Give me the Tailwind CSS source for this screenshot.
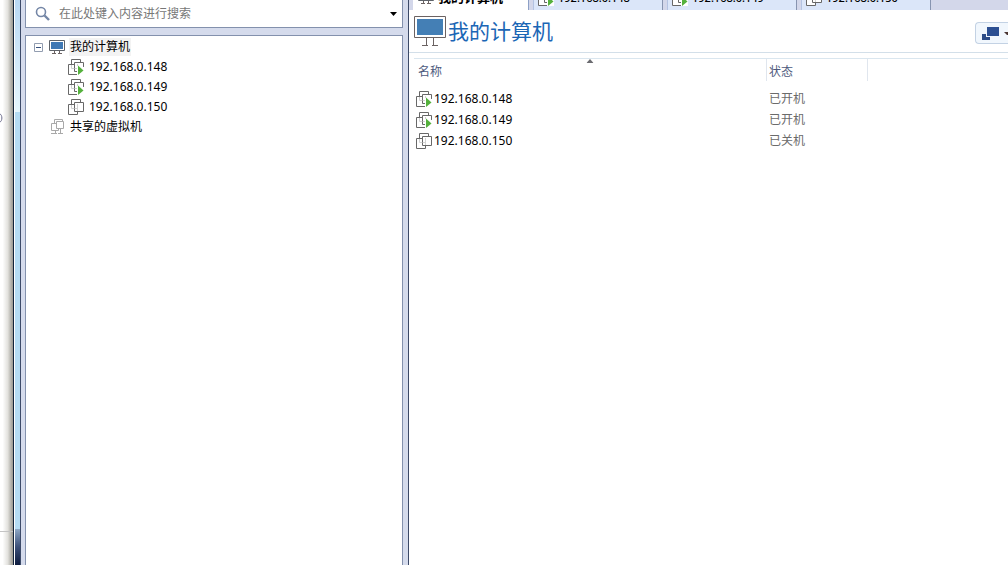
<!DOCTYPE html>
<html lang="zh-CN">
<head>
    <meta charset="UTF-8">
    <meta name="viewport" content="width=device-width, initial-scale=1.0">
    <title>我的计算机</title>
    <script src="https://cdn.jsdelivr.net/npm/@tailwindcss/browser@4"></script>
</head>
<body class="flex h-screen overflow-hidden bg-white font-['Noto_Sans','Noto_Sans_CJK_SC',sans-serif] text-xs text-black">

    <!-- 图标 -->
    <svg class="hidden">
        <symbol id="icon-computer" viewBox="0 0 32 32">
            <path d="M.5 1.500h31v21H.5z" fill="#fff" stroke="#6b6262"/>
            <path d="M3 4h26v16H3z" fill="#447fb5"/>
            <path d="M12.500 23v7M19.500 23v7M8 30.500h6M18 30.500h6" fill="none" stroke="#6b6262"/>
        </symbol>
        <symbol id="icon-computer-small" viewBox="0 0 16 16">
            <path d="M.5 1.500h15v10H.5z" fill="#fff" stroke="#5d6269"/>
            <path d="M2 3h12v7H2z" fill="#3f78b4"/>
            <path d="M5.500 12v3M10.500 12v3M3 14.500h4M9 14.500h4" fill="none" stroke="#6b6262"/>
        </symbol>
        <symbol id="icon-vm" viewBox="0 0 16 16">
            <g fill="#fff" stroke="#686868">
                <path d="M3.500.5h9v9h-9z"/>
                <path d="M.5 5.500h9v10h-9z"/>
                <path d="M6.500 3.500h9v9h-9z"/>
            </g>
            <path d="M9.500 5v7M7 9.500h2M3.500 6v3.500h3" fill="none" stroke="#d2d2d2"/>
        </symbol>
        <symbol id="icon-vm-on" viewBox="0 0 16 16">
            <use href="#icon-vm"/>
            <path d="M9 7l7 1v8H9z" fill="#fff"/>
            <path d="M10 6.500l5.500 5L10 16z" fill="#55b13d"/>
        </symbol>
        <symbol id="icon-shared" viewBox="0 0 16 16">
            <g fill="#fff" stroke="#a9a9a9">
                <path d="M4.500.5h8v8h-8z"/>
                <path d="M1.500 4.500h7v7h-7z"/>
                <path d="M6.500 2.500h7v7h-7z"/>
                <path d="M5.500 12v2M10.500 10v4M1 14.500h6M8 14.500h5" fill="none"/>
            </g>
        </symbol>
    </svg>

    <!-- 窗口边框 -->
    <div class="flex w-[25px] shrink-0">
        <div class="flex w-[13px] flex-col bg-linear-to-r from-white from-20% via-[#e2e1dd] via-60% to-[#98978f]">
            <div class="flex h-[123px] items-end overflow-hidden">
                <svg class="h-[10px] w-[3px]" viewBox="0 0 3 10"><path d="M0 1c2.500 1 2.500 7 0 8" fill="none" stroke="#6c6c8c"/></svg>
            </div>
            <div class="h-[409px] border-b border-[#c4c4c4]"></div>
        </div>
        <div class="w-px bg-[#12243a]"></div>
        <div class="w-px bg-white"></div>
        <div class="flex w-[5px] flex-col bg-[#b5dcf3]">
            <div class="h-28 bg-linear-to-b from-[#b9d9f4] to-[#e6f7fd]"></div>
            <div class="grow"></div>
            <div class="h-9 bg-linear-to-b from-[#8fa9c6] via-[#3c5079] to-[#0d1c3e]"></div>
        </div>
        <div class="w-px bg-[#3c4a68]"></div>
        <div class="w-1 bg-[#d5dbec]"></div>
    </div>

    <!-- 虚拟机库 -->
    <aside class="flex w-[378px] shrink-0 flex-col gap-[7px] bg-[#d5dbec]">
        <div class="flex h-7 items-center border border-t-0 border-[#8391ad] bg-white pr-[5px] pl-[9px]">
            <label for="search" aria-label="搜索">
                <svg class="h-4 w-4" viewBox="0 0 16 16" fill="none" stroke="#7486a6">
                    <circle cx="6" cy="6" r="4.500" stroke-width="1.600"/>
                    <path d="M9.500 9.500l4.500 4.500" stroke-width="2.400"/>
                </svg>
            </label>
            <input id="search" type="text" placeholder="在此处键入内容进行搜索" class="ml-2 grow text-xs outline-none placeholder:text-[#777777]">
            <button type="button" aria-label="搜索选项">
                <svg class="h-1 w-[7px]" viewBox="0 0 7 4"><path d="M0 0h7L3.500 4z"/></svg>
            </button>
        </div>
        <ul class="grow border border-b-0 border-[#8391ad] bg-white pt-px pl-2 leading-5">
            <li>
                <div class="flex h-5 items-center">
                    <button type="button" aria-label="折叠">
                        <svg class="h-[9px] w-[9px]" viewBox="0 0 9 9" fill="#fff" stroke="#929db0"><path d="M.5.5h8v8h-8z"/><path d="M2 4.500h5" stroke="#35507e"/></svg>
                    </button>
                    <svg class="ml-1.5 h-4 w-4"><use href="#icon-computer-small"/></svg>
                    <span class="ml-1 bg-[#f3f3f3] px-px leading-[18px]">我的计算机</span>
                </div>
                <ul class="pl-[34px]">
                    <li class="flex h-5 items-center gap-[5px]"><svg class="h-4 w-4"><use href="#icon-vm-on"/></svg>192.168.0.148</li>
                    <li class="flex h-5 items-center gap-[5px]"><svg class="h-4 w-4"><use href="#icon-vm-on"/></svg>192.168.0.149</li>
                    <li class="flex h-5 items-center gap-[5px]"><svg class="h-4 w-4"><use href="#icon-vm"/></svg>192.168.0.150</li>
                </ul>
            </li>
            <li class="flex h-5 items-center gap-1 pl-4"><svg class="h-4 w-4"><use href="#icon-shared"/></svg>共享的虚拟机</li>
        </ul>
    </aside>

    <div class="w-1.5 shrink-0 border-r border-[#3c4a68] bg-[#d5dbec]"></div>

    <main class="flex min-w-0 grow flex-col">
        <!-- 标签页 -->
        <nav class="flex h-2.5 items-end gap-1 overflow-hidden bg-[#d3d7ea] pl-1 text-[11px]">
            <button type="button" class="flex h-5 w-[116px] shrink-0 items-center gap-1 border-r border-[#8da0c6] bg-white pb-1.5 pl-[5px] text-[13px] leading-4 font-bold"><svg class="h-4 w-4 shrink-0"><use href="#icon-computer-small"/></svg>我的计算机</button>
            <button type="button" class="flex h-5 w-[130px] shrink-0 items-center gap-1 border-x border-[#8794b0] border-l-[#b4c3e2] bg-[#dbe6f9] pb-1 pl-1 leading-4 font-medium"><svg class="h-4 w-4 shrink-0"><use href="#icon-vm-on"/></svg>192.168.0.148</button>
            <button type="button" class="flex h-5 w-[130px] shrink-0 items-center gap-1 border-x border-[#8794b0] border-l-[#b4c3e2] bg-[#dbe6f9] pb-1 pl-1 leading-4 font-medium"><svg class="h-4 w-4 shrink-0"><use href="#icon-vm-on"/></svg>192.168.0.149</button>
            <button type="button" class="flex h-5 w-[130px] shrink-0 items-center gap-1 border-x border-[#8794b0] border-l-[#b4c3e2] bg-[#dbe6f9] pb-1 pl-1 leading-4 font-medium"><svg class="h-4 w-4 shrink-0"><use href="#icon-vm"/></svg>192.168.0.150</button>
        </nav>

        <header class="flex h-[43px] items-center justify-between border-b border-[#d3dfe9] pl-[5px]">
            <h1 class="flex items-center gap-0.5 text-[21px] leading-8 text-[#1b66b5]">
                <svg class="h-8 w-8"><use href="#icon-computer"/></svg>我的计算机
            </h1>
            <button type="button" aria-label="视图" class="mt-1 flex h-[22px] items-center gap-[5px] rounded-l-sm border border-r-0 border-[#c3d2e4] bg-[#f1f7fd] pl-1.5">
                <svg class="h-[14px] w-[17px]" viewBox="0 0 17 14">
                    <path d="M0 8h8v6H0z" fill="#2d4c87"/>
                    <path d="M4 0h13v11H4z" fill="#f1f7fd"/>
                    <path d="M5 1h12v9H5z" fill="#2c4f92"/>
                </svg>
                <svg class="h-[3px] w-1" viewBox="0 0 4 3"><path d="M0 0h4v3H3z" fill="#4a3532"/></svg>
            </button>
        </header>

        <!-- 虚拟机列表 -->
        <div class="mt-[5px] ml-[5px] border-t border-[#dae6ef]">
            <table class="w-full table-fixed text-left">
                <thead>
                    <tr class="h-[29px] align-top text-[#4d5a7d]">
                        <th scope="col" class="w-[353px] font-normal">
                            <div class="relative h-[22px] border-r border-[#e0e6ee] pl-1 leading-[26px]">名称
                                <svg class="absolute top-0 left-1/2 h-1 w-[7px] -translate-x-1/2" viewBox="0 0 7 4"><path d="M0 4h7L3.500 0z" fill="#6b6b70"/></svg>
                            </div>
                        </th>
                        <th scope="col" class="w-[101px] font-normal"><div class="h-[22px] border-r border-[#e0e6ee] pl-0.5 leading-[26px]">状态</div></th>
                        <th></th>
                    </tr>
                </thead>
                <tbody>
                    <tr class="h-[21px]">
                        <td><div class="flex items-center gap-0.5 pl-0.5"><svg class="h-4 w-4"><use href="#icon-vm-on"/></svg>192.168.0.148</div></td>
                        <td class="pl-0.5 text-[#6b6b6b]">已开机</td>
                        <td></td>
                    </tr>
                    <tr class="h-[21px]">
                        <td><div class="flex items-center gap-0.5 pl-0.5"><svg class="h-4 w-4"><use href="#icon-vm-on"/></svg>192.168.0.149</div></td>
                        <td class="pl-0.5 text-[#6b6b6b]">已开机</td>
                        <td></td>
                    </tr>
                    <tr class="h-[21px]">
                        <td><div class="flex items-center gap-0.5 pl-0.5"><svg class="h-4 w-4"><use href="#icon-vm"/></svg>192.168.0.150</div></td>
                        <td class="pl-0.5 text-[#6b6b6b]">已关机</td>
                        <td></td>
                    </tr>
                </tbody>
            </table>
        </div>
    </main>
</body>
</html>
